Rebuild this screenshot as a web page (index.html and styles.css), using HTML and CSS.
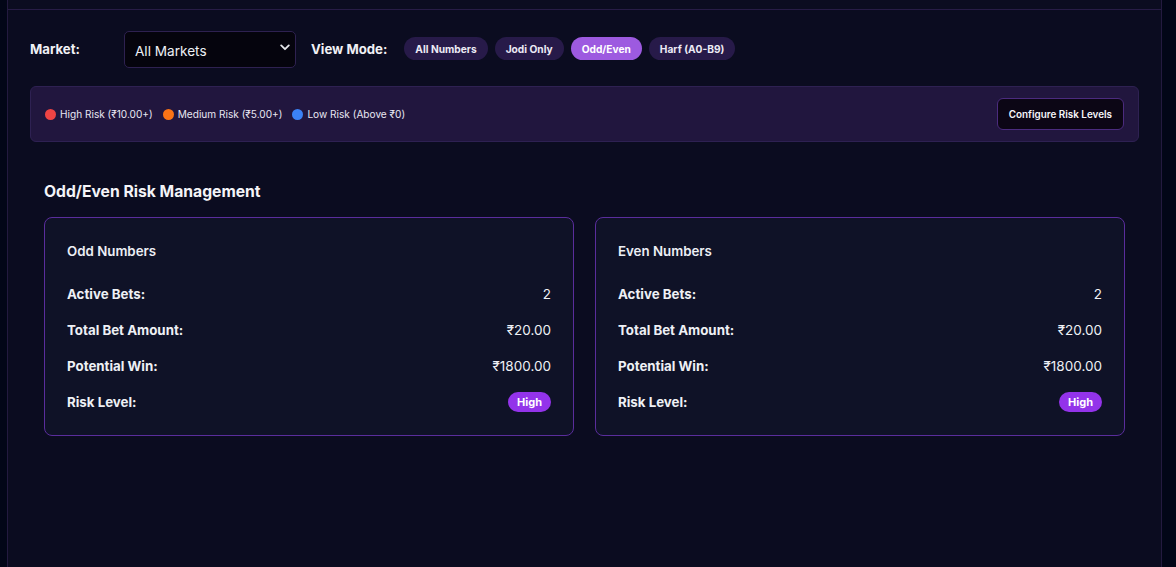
FILE: index.html
```html
<!DOCTYPE html>
<html lang="en">
<head>
<meta charset="utf-8">
<title>Odd/Even Risk Management</title>
<link rel="stylesheet" href="styles.css">
</head>
<body>
<div class="panel">
  <div class="panel-head"></div>
  <div class="panel-body">
    <div class="toolbar">
      <label class="lbl">Market:</label>
      <div class="select">
        <span>All Markets</span>
        <svg class="chev" width="10" height="7" viewBox="0 0 10 7"><path d="M1.2 1.4 L5 5.2 L8.8 1.4" fill="none" stroke="#e5e7eb" stroke-width="1.8" stroke-linecap="round" stroke-linejoin="round"/></svg>
      </div>
      <span class="lbl vm">View Mode:</span>
      <div class="pills">
        <button class="pill">All Numbers</button>
        <button class="pill">Jodi Only</button>
        <button class="pill active">Odd/Even</button>
        <button class="pill">Harf (A0-B9)</button>
      </div>
    </div>

    <div class="legend">
      <div class="legend-items">
        <span class="li"><i class="dot red"></i>High Risk (₹10.00+)</span>
        <span class="li"><i class="dot orange"></i>Medium Risk (₹5.00+)</span>
        <span class="li"><i class="dot blue"></i>Low Risk (Above ₹0)</span>
      </div>
      <button class="cfg">Configure Risk Levels</button>
    </div>

    <section class="section">
      <h2>Odd/Even Risk Management</h2>
      <div class="cards">
        <div class="card">
          <h3>Odd Numbers</h3>
          <div class="row"><span class="k">Active Bets:</span><span class="v">2</span></div>
          <div class="row"><span class="k">Total Bet Amount:</span><span class="v">₹20.00</span></div>
          <div class="row"><span class="k">Potential Win:</span><span class="v">₹1800.00</span></div>
          <div class="row"><span class="k">Risk Level:</span><span class="badge">High</span></div>
        </div>
        <div class="card">
          <h3>Even Numbers</h3>
          <div class="row"><span class="k">Active Bets:</span><span class="v">2</span></div>
          <div class="row"><span class="k">Total Bet Amount:</span><span class="v">₹20.00</span></div>
          <div class="row"><span class="k">Potential Win:</span><span class="v">₹1800.00</span></div>
          <div class="row"><span class="k">Risk Level:</span><span class="badge">High</span></div>
        </div>
      </div>
    </section>
  </div>
</div>
</body>
</html>
```
FILE: styles.css
```css
* { box-sizing: border-box; }
html, body {
  margin: 0;
  padding: 0;
  background: #020617;
  height: 100%;
  overflow: hidden;
}
body {
  font-family: Inter, "Noto Sans", sans-serif;
  color: #e5e7eb;
}
.panel {
  margin-left: 7px;
  width: 1155px;
  min-height: 567px;
  background: #0b0c20;
  border-left: 1px solid #231a3f;
  border-right: 1px solid #231a3f;
}
.panel-head {
  height: 10px;
  border-bottom: 1px solid #271c46;
}
.panel-body {
  padding: 21px 22px 0 22px;
}
.toolbar {
  display: flex;
  align-items: center;
  height: 36px;
}
.lbl {
  font-size: 13.2px;
  font-weight: 700;
  color: #f1f1f5;
}
.select {
  margin-left: 44px;
  width: 172px;
  height: 37px;
  background: #05040d;
  border: 1px solid #2e2150;
  border-radius: 5px;
  display: flex;
  align-items: center;
  justify-content: space-between;
  padding: 0 5px 0 10px;
  font-size: 13.6px;
  color: #eef0f5;
}
.select span { padding-top: 4px; }
.chev { margin-top: -3px; }
.vm { margin-left: 15px; }
.pills {
  display: flex;
  gap: 7px;
  margin-left: 17px;
  margin-top: -1px;
}
.pill {
  border: none;
  height: 23px;
  padding: 0 11px;
  border-radius: 12px;
  background: #271a49;
  color: #eceaf5;
  font-family: inherit;
  font-size: 10.2px;
  font-weight: 700;
}
.pill.active {
  background: #9d5ae0;
  color: #fff;
}
.legend {
  margin-top: 19px;
  height: 56px;
  background: #21163e;
  border: 1px solid #2e2152;
  border-radius: 6px;
  display: flex;
  align-items: center;
  justify-content: space-between;
  padding: 0 14px 0 14px;
}
.legend-items {
  display: flex;
  gap: 10px;
  font-size: 10.1px;
  color: #e8e6f2;
}
.li { display: flex; align-items: center; gap: 4px; }
.dot {
  display: inline-block;
  width: 11px;
  height: 11px;
  border-radius: 50%;
}
.dot.red { background: #ef4444; }
.dot.orange { background: #f97316; }
.dot.blue { background: #3b82f6; }
.cfg {
  height: 32px;
  padding: 0 11px;
  background: #0c0615;
  border: 1px solid #4b2b7e;
  border-radius: 6px;
  color: #f5f5fa;
  font-family: inherit;
  font-size: 9.9px;
  font-weight: 600;
}
.section {
  padding: 0 14px;
}
.section h2 {
  margin: 40px 0 15px 0;
  font-size: 15.7px;
  font-weight: 700;
  color: #f4f4f8;
  line-height: 20px;
}
.cards {
  display: grid;
  grid-template-columns: 1fr 1fr;
  gap: 21px;
}
.card {
  background: #0f1227;
  border: 1px solid #5a2d9c;
  border-radius: 8px;
  padding: 24px 22px 21px 22px;
  height: 219px;
}
.card h3 {
  margin: 0 0 16px 0;
  font-size: 13.3px;
  font-weight: 600;
  line-height: 18px;
  color: #eceef5;
}
.row {
  display: flex;
  justify-content: space-between;
  align-items: center;
  height: 36px;
}
.k {
  font-size: 13.3px;
  font-weight: 700;
  color: #eef0f5;
}
.v {
  font-size: 13.5px;
  color: #eef0f5;
}
.badge {
  height: 20px;
  line-height: 20px;
  padding: 0 9px;
  border-radius: 10px;
  background: #9333ea;
  color: #fff;
  font-size: 11px;
  font-weight: 700;
}
```
